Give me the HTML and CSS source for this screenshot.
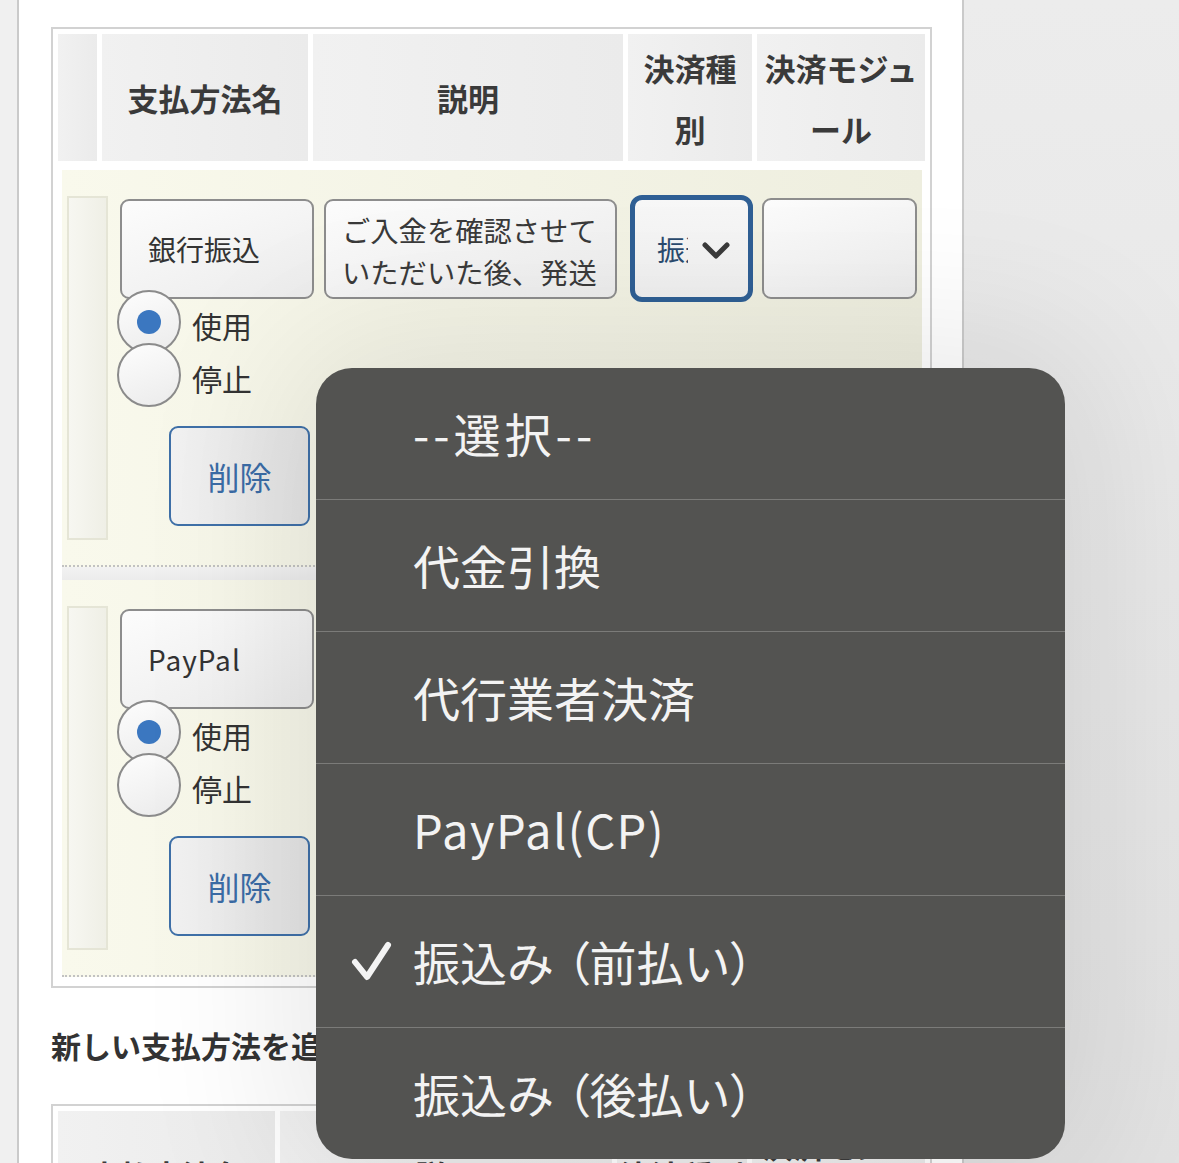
FILE: index.html
```html
<!DOCTYPE html>
<html lang="ja">
<head>
<meta charset="utf-8">
<title>支払方法設定</title>
<link rel="stylesheet" href="styles.css">
</head>
<body>
<div class="page">
  <div class="strip"></div>
  <main class="panel">
    <div class="tbl-box">
      <table class="tbl">
        <colgroup>
          <col class="c1"><col class="c2"><col class="c3"><col class="c4"><col class="c5">
        </colgroup>
        <thead>
          <tr>
            <th></th>
            <th><div class="th-in">支払方法名</div></th>
            <th><div class="th-in">説明</div></th>
            <th><div class="th-in">決済種別</div></th>
            <th><div class="th-in">決済モジュール</div></th>
          </tr>
        </thead>
        <tbody>
          <tr>
            <td colspan="5" class="body-cell">
              <div class="row">
                <div class="handle"></div>
                <div class="name-col">
                  <div class="field name-field">銀行振込</div>
                  <div class="radios">
                    <div class="radio-line"><span class="radio checked"></span><span class="radio-label">使用</span></div>
                    <div class="radio-line"><span class="radio"></span><span class="radio-label">停止</span></div>
                  </div>
                  <button class="del-btn">削除</button>
                </div>
                <div class="field desc-field"><div class="desc-clip">ご入金を確認させていただいた後、発送いたします。</div></div>
                <div class="select-field">
                  <span class="select-text">振込み（前払い）</span>
                  <svg class="chev" width="28" height="18" viewBox="0 0 28 18"><path d="M3 3 L14 14 L25 3" fill="none" stroke="#3a3a3a" stroke-width="5" stroke-linecap="round" stroke-linejoin="round"/></svg>
                </div>
                <div class="field module-field"></div>
              </div>
              <div class="row-sep"></div>
              <div class="row">
                <div class="handle"></div>
                <div class="name-col">
                  <div class="field name-field latin">PayPal</div>
                  <div class="radios">
                    <div class="radio-line"><span class="radio checked"></span><span class="radio-label">使用</span></div>
                    <div class="radio-line"><span class="radio"></span><span class="radio-label">停止</span></div>
                  </div>
                  <button class="del-btn">削除</button>
                </div>
                <div class="field desc-field"><div class="desc-clip"></div></div>
                <div class="select-field plain">
                  <span class="select-text">PayPal(CP)</span>
                  <svg class="chev" width="28" height="18" viewBox="0 0 28 18"><path d="M3 3 L14 14 L25 3" fill="none" stroke="#3a3a3a" stroke-width="5" stroke-linecap="round" stroke-linejoin="round"/></svg>
                </div>
                <div class="field module-field"></div>
              </div>
            </td>
          </tr>
        </tbody>
      </table>
    </div>

    <h3 class="add-title">新しい支払方法を追加</h3>

    <div class="tbl-box">
      <table class="tbl">
        <colgroup>
          <col class="d1"><col class="d2"><col class="d3"><col class="d4">
        </colgroup>
        <thead>
          <tr>
            <th><div class="th-in">支払方法名</div></th>
            <th><div class="th-in">説明</div></th>
            <th><div class="th-in nopad">決済種別</div></th>
            <th><div class="th-in">決済モジュール</div></th>
          </tr>
        </thead>
      </table>
    </div>
  </main>
</div>

<div class="picker">
  <div class="opt wide">--選択--</div>
  <div class="opt">代金引換</div>
  <div class="opt">代行業者決済</div>
  <div class="opt latin">PayPal(CP)</div>
  <div class="opt selected">
    <svg class="check" width="42" height="40" viewBox="0 0 42 40"><path d="M5 21 L17 36 L38 4" fill="none" stroke="#f4f4f4" stroke-width="6" stroke-linecap="round" stroke-linejoin="round"/></svg>
    振込み<span class="po">（</span>前払い<span class="pc">）</span>
  </div>
  <div class="opt">振込み<span class="po">（</span>後払い<span class="pc">）</span></div>
</div>
</body>
</html>
```

FILE: styles.css
```css
html, body {
  margin: 0;
  padding: 0;
}

body {
  width: 1179px;
  height: 1163px;
  overflow: hidden;
  position: relative;
  background: linear-gradient(to bottom, #ececec, #e2e2e2);
  font-family: "Noto Sans CJK JP", "Noto Sans", sans-serif;
  color: #333;
}

.page {
  display: flex;
  height: 1163px;
}

.strip {
  flex: none;
  width: 17px;
  background: #f0f0f0;
  border-right: 2px solid #cacaca;
}

.panel {
  flex: none;
  width: 945px;
  box-sizing: border-box;
  background: #fff;
  border-right: 2px solid #cacaca;
  padding: 27px 0 0 32px;
}

.tbl-box {
  width: 881px;
  box-sizing: border-box;
  border: 2px solid #d2d2d2;
}

.tbl {
  width: 100%;
  border-spacing: 5px;
  table-layout: fixed;
}

.c1 { width: 39px; }
.c2 { width: 206px; }
.c3 { width: 310px; }
.c4 { width: 124px; }
.c5 { width: 168px; }

.d1 { width: 217px; }
.d2 { width: 332px; }
.d3 { width: 130px; }
.d4 { width: 173px; }

.tbl th {
  background: linear-gradient(to right, #f1f1f1, #ebebeb);
  height: 127px;
  padding: 0;
  vertical-align: middle;
  text-align: center;
  font-size: 31px;
  font-weight: 700;
  line-height: 61px;
  color: #3a3a3a;
}

.th-in {
  padding: 0 6px;
  line-break: anywhere;
}

.th-in.nopad {
  padding: 0;
}

.body-cell {
  padding: 4px 3px 4px 4px;
  background: #fff;
}

.row {
  box-sizing: border-box;
  height: 397px;
  padding: 26px 0 0 5px;
  display: flex;
  align-items: flex-start;
  background: linear-gradient(to right, #f9f9ec, #eeeedf);
  border-bottom: 2px dotted #c2c2c2;
}

.row-sep {
  height: 13px;
  background: linear-gradient(to bottom, #f2f2f2, #ececec);
}

.handle {
  flex: none;
  width: 41px;
  height: 344px;
  box-sizing: border-box;
  border: 2px solid #e5e5d6;
  background: linear-gradient(to right, #f7f7f1, #efefe6);
}

.name-col {
  flex: none;
  width: 194px;
  margin: 3px 0 0 12px;
}

.field {
  box-sizing: border-box;
  border: 2px solid #8d8d8d;
  border-radius: 9px;
  background: linear-gradient(160deg, #fcfcfc, #ececec);
  color: #333;
}

.name-field {
  height: 100px;
  padding-left: 26px;
  font-size: 28px;
  line-height: 96px;
}

.name-field.latin {
  letter-spacing: 1px;
}

.radios {
  margin-top: -4px;
}

.radio-line {
  display: flex;
  align-items: center;
  height: 53px;
}

.radio {
  flex: none;
  box-sizing: border-box;
  width: 64px;
  height: 64px;
  margin-left: -3px;
  border: 2px solid #8b8b8b;
  border-radius: 50%;
  background: linear-gradient(160deg, #fdfdfd, #ebebeb);
  display: flex;
  align-items: center;
  justify-content: center;
}

.radio.checked::after {
  content: "";
  width: 24px;
  height: 24px;
  border-radius: 50%;
  background: #3b77c0;
}

.radio-label {
  margin-left: 11px;
  padding-top: 8px;
  font-size: 30px;
  line-height: 53px;
  color: #333;
}

.del-btn {
  display: block;
  width: 141px;
  height: 100px;
  box-sizing: border-box;
  margin: 25px 0 0 49px;
  padding: 0;
  border: 2px solid #3f70a8;
  border-radius: 9px;
  background: linear-gradient(to right, #f2f2f2, #e3e3e3);
  color: #3b6ca6;
  font-family: inherit;
  font-size: 32px;
}

.desc-field {
  flex: none;
  width: 293px;
  height: 100px;
  margin: 3px 0 0 10px;
  padding: 8px 8px 0 16px;
  font-size: 28.3px;
  line-height: 42px;
  color: #3a3a3a;
}

.desc-clip {
  height: 84px;
  overflow: hidden;
}

.select-field {
  flex: none;
  width: 123px;
  height: 107px;
  box-sizing: border-box;
  margin: -1px 0 0 13px;
  padding-left: 22px;
  border: 5px solid #2f5f94;
  border-radius: 12px;
  background: linear-gradient(to bottom, #f7f7f7, #efefef);
  display: flex;
  align-items: center;
}

.select-field.plain {
  border: 2px solid #8d8d8d;
  height: 101px;
  margin-top: 2px;
}

.select-text {
  width: 31px;
  overflow: hidden;
  white-space: nowrap;
  font-size: 28px;
  color: #2a4a6e;
}

.chev {
  flex: none;
  margin: 4px 0 0 14px;
}

.module-field {
  flex: none;
  width: 155px;
  height: 101px;
  margin: 2px 0 0 9px;
}

.add-title {
  margin: 37px 0 39px;
  font-size: 30px;
  font-weight: 700;
  line-height: 40px;
  color: #333;
}

.picker {
  position: absolute;
  left: 316px;
  top: 368px;
  width: 749px;
  background: #535351;
  border-radius: 36px;
  overflow: hidden;
  box-shadow: 0 0 160px 30px rgba(0, 0, 0, 0.09);
}

.opt {
  position: relative;
  height: 131px;
  line-height: 129px;
  padding-left: 97px;
  font-size: 47px;
  color: #f3f3f3;
  white-space: nowrap;
  border-top: 1px solid #7b7b79;
}

.opt:first-child {
  border-top: none;
}

.opt.wide {
  letter-spacing: 4px;
}

.opt.latin {
  letter-spacing: 1.5px;
}

.po,
.pc {
  font-feature-settings: "palt";
}

.po {
  margin-left: 12px;
}

.check {
  position: absolute;
  left: 34px;
  top: 45px;
}
```
